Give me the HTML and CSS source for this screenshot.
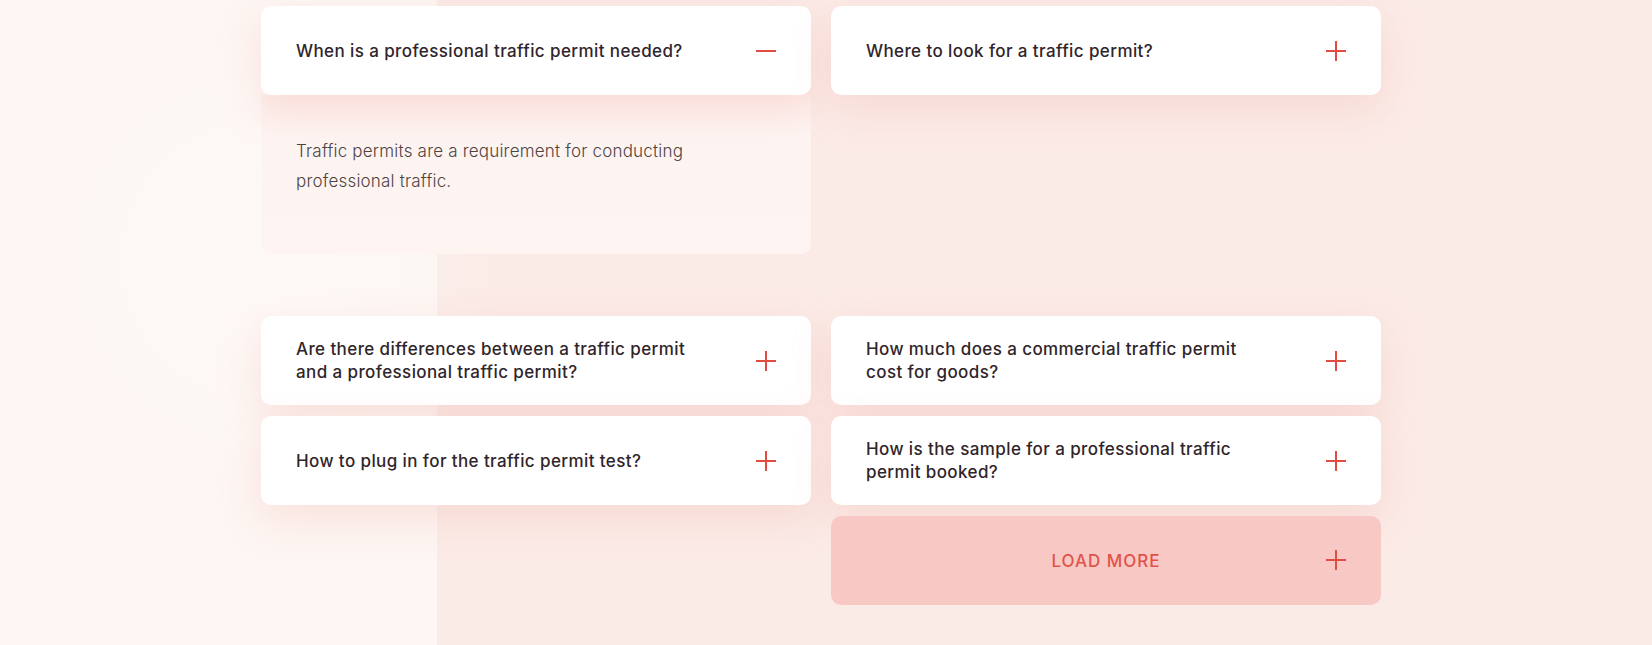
FILE: index.html
```html
<!DOCTYPE html>
<html lang="en">
<head>
<meta charset="utf-8">
<title>FAQ</title>
<link rel="stylesheet" href="styles.css">
</head>
<body>
<section class="page">
  <div class="faq">
    <div class="item open">
      <div class="card">
        <span class="q">When is a professional traffic permit needed?</span>
        <svg class="icon" viewBox="0 0 20 20"><path d="M0 10H20"/></svg>
      </div>
      <div class="answer">Traffic permits are a requirement for conducting<br>professional traffic.</div>
    </div>
    <div class="item">
      <div class="card">
        <span class="q">Where to look for a traffic permit?</span>
        <svg class="icon" viewBox="0 0 20 20"><path d="M0 10H20M10 0V20"/></svg>
      </div>
    </div>
    <div class="item">
      <div class="card">
        <span class="q">Are there differences between a traffic permit<br>and a professional traffic permit?</span>
        <svg class="icon" viewBox="0 0 20 20"><path d="M0 10H20M10 0V20"/></svg>
      </div>
    </div>
    <div class="item">
      <div class="card">
        <span class="q">How much does a commercial traffic permit<br>cost for goods?</span>
        <svg class="icon" viewBox="0 0 20 20"><path d="M0 10H20M10 0V20"/></svg>
      </div>
    </div>
    <div class="item">
      <div class="card">
        <span class="q">How to plug in for the traffic permit test?</span>
        <svg class="icon" viewBox="0 0 20 20"><path d="M0 10H20M10 0V20"/></svg>
      </div>
    </div>
    <div class="item">
      <div class="card">
        <span class="q">How is the sample for a professional traffic<br>permit booked?</span>
        <svg class="icon" viewBox="0 0 20 20"><path d="M0 10H20M10 0V20"/></svg>
      </div>
    </div>
    <div class="item spacer"></div>
    <div class="item">
      <button class="card more" type="button">
        <span class="more-label">LOAD MORE</span>
        <svg class="icon" viewBox="0 0 20 20"><path d="M0 10H20M10 0V20"/></svg>
      </button>
    </div>
  </div>
</section>
</body>
</html>
```

FILE: styles.css
```css
* { box-sizing: border-box; }

html, body {
  margin: 0;
  padding: 0;
}

body {
  font-family: "Inter", "Noto Sans", "Liberation Sans", sans-serif;
  color: #30252a;
}

.page {
  height: 645px;
  overflow: hidden;
  background:
    radial-gradient(circle at 260px 260px, rgba(255, 255, 255, 0.35) 0, rgba(255, 255, 255, 0) 260px),
    linear-gradient(to right, #fdf6f3 0, #fdf6f3 437px, #fbebe7 437px, #fbebe7 100%);
  padding: 6px 0 0 261px;
}

.faq {
  width: 1120px;
  display: grid;
  grid-template-columns: 550px 550px;
  column-gap: 20px;
  row-gap: 11px;
  align-items: start;
}

.card {
  height: 89px;
  background: #ffffff;
  border-radius: 10px;
  display: flex;
  align-items: center;
  justify-content: space-between;
  padding: 0 35px;
  box-shadow: 0 14px 40px rgba(238, 160, 150, 0.24);
  position: relative;
  z-index: 1;
}

.q {
  font-size: 17px;
  font-weight: 500;
  line-height: 23px;
  letter-spacing: 0.4px;
  color: #30252a;
  padding-top: 1px;
}

.icon {
  width: 20px;
  height: 20px;
  flex: none;
  fill: none;
  stroke: #e04b43;
  stroke-width: 2;
}

.answer {
  background: linear-gradient(to bottom, #fdeeeb 0, #fdf4f2 40px, #fef5f3 100%);
  border-radius: 0 0 10px 10px;
  padding: 41px 35px 0;
  height: 159px;
  margin-bottom: 51px;
  font-size: 17px;
  font-weight: 300;
  line-height: 30px;
  letter-spacing: 0.2px;
  color: #4e4443;
}

.more {
  width: 100%;
  border: 0;
  font: inherit;
  background: #f8c9c4;
  box-shadow: none;
  justify-content: center;
  cursor: pointer;
}

.more-label {
  font-size: 17px;
  font-weight: 500;
  letter-spacing: 1px;
  color: #e0524a;
}

.more .icon {
  position: absolute;
  right: 35px;
  top: 34px;
}
```
